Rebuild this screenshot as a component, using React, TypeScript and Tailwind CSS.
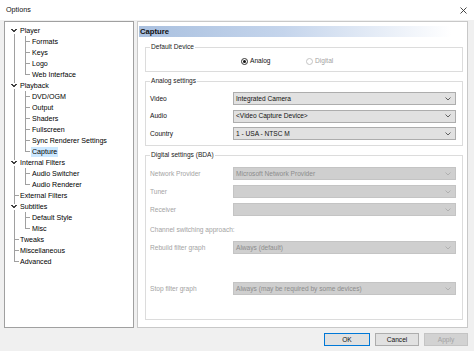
import React from "react";

type Node = { t: string; l: 0 | 1; exp?: boolean; sel?: boolean };

const tree: Node[] = [
  { t: "Player", l: 0, exp: true },
  { t: "Formats", l: 1 },
  { t: "Keys", l: 1 },
  { t: "Logo", l: 1 },
  { t: "Web Interface", l: 1 },
  { t: "Playback", l: 0, exp: true },
  { t: "DVD/OGM", l: 1 },
  { t: "Output", l: 1 },
  { t: "Shaders", l: 1 },
  { t: "Fullscreen", l: 1 },
  { t: "Sync Renderer Settings", l: 1 },
  { t: "Capture", l: 1, sel: true },
  { t: "Internal Filters", l: 0, exp: true },
  { t: "Audio Switcher", l: 1 },
  { t: "Audio Renderer", l: 1 },
  { t: "External Filters", l: 0 },
  { t: "Subtitles", l: 0, exp: true },
  { t: "Default Style", l: 1 },
  { t: "Misc", l: 1 },
  { t: "Tweaks", l: 0 },
  { t: "Miscellaneous", l: 0 },
  { t: "Advanced", l: 0 },
];

const ROW = 11;
const TOP = 3;
const cy = (i: number) => TOP + ROW * i + 5.5;

function TreeLines() {
  const segs: React.ReactNode[] = [];
  const roots = tree.map((n, i) => (n.l === 0 ? i : -1)).filter((i) => i >= 0);
  const RX = 9.5;
  const CX = 20.5;
  for (let k = 0; k < roots.length - 1; k++) {
    const a = roots[k];
    const b = roots[k + 1];
    const y1 = cy(a) + (tree[a].exp ? 3 : 0);
    const y2 = cy(b) - (tree[b].exp ? 3 : 0);
    segs.push(<line key={`r${k}`} x1={RX} y1={y1} x2={RX} y2={y2} />);
  }
  roots.forEach((r) => {
    if (!tree[r].exp) {
      segs.push(<line key={`rt${r}`} x1={RX} y1={cy(r)} x2={14} y2={cy(r)} />);
    } else {
      const c = cy(r);
      segs.push(
        <polyline
          key={`ch${r}`}
          points={`${6.5},${c - 1.5} ${9},${c + 1} ${11.5},${c - 1.5}`}
          fill="none"
          stroke="#404040"
          strokeWidth={1}
        />
      );
      let last = r;
      let j = r + 1;
      while (j < tree.length && tree[j].l === 1) {
        last = j;
        segs.push(<line key={`ct${j}`} x1={CX} y1={cy(j)} x2={25} y2={cy(j)} />);
        j++;
      }
      if (last > r) {
        segs.push(<line key={`cv${r}`} x1={CX} y1={cy(r) + 5.5} x2={CX} y2={cy(last) + 0.5} />);
      }
    }
  });
  return (
    <svg
      className="absolute left-0 top-0"
      width={128}
      height={260}
      stroke="#a0a0a0"
      strokeWidth={1}
      shapeRendering="crispEdges"
    >
      {segs}
    </svg>
  );
}

function Chevron({ color }: { color: string }) {
  return (
    <svg width="6" height="4" viewBox="0 0 6 4">
      <polyline points="0.5,0.5 3,3 5.5,0.5" fill="none" stroke={color} strokeWidth="1" />
    </svg>
  );
}

function Select({ value, disabled }: { value: string; disabled?: boolean }) {
  return (
    <div
      className={
        disabled
          ? "w-[223px] h-[13px] border border-[#c4c4c4] bg-[#cfcfcf] text-[#8c8c8c] flex items-center justify-between pl-[2px] pr-[4px]"
          : "w-[223px] h-[13px] border border-[#adadad] bg-[#e1e1e1] text-[#111] flex items-center justify-between pl-[2px] pr-[4px]"
      }
    >
      <span className="leading-[10px] whitespace-nowrap">{value}</span>
      <Chevron color={disabled ? "#b0b0b0" : "#606060"} />
    </div>
  );
}

function Row({ label, value, disabled }: { label: string; value: string; disabled?: boolean }) {
  return (
    <div className="flex items-center h-[13px]">
      <div className={disabled ? "w-[83px] text-[#a3a3a3]" : "w-[83px] text-[#111]"}>{label}</div>
      <Select value={value} disabled={disabled} />
    </div>
  );
}

function Legend({ children }: { children: React.ReactNode }) {
  return <legend className="px-[1px] leading-[10px] text-[#222]">{children}</legend>;
}

export default function App() {
  return (
    <div
      className="w-[474px] h-[351px] bg-[#f0f0f0] flex flex-col overflow-hidden text-black"
      style={{ fontFamily: '"Liberation Sans", Arial, sans-serif' }}
    >
      {/* Title bar */}
      <div className="h-[20px] bg-white flex items-center justify-between pl-[6px] pr-[7px]">
        <span className="text-[7.2px] leading-[10px] text-[#111]">Options</span>
        <svg width="7" height="7" viewBox="0 0 7 7">
          <path d="M0.5,0.5 L6.5,6.5 M6.5,0.5 L0.5,6.5" stroke="#333" strokeWidth="0.9" />
        </svg>
      </div>

      {/* Main */}
      <div className="flex pl-[4px] gap-[3px] mt-[1px] h-[307px]">
        {/* Tree */}
        <div className="relative w-[130px] h-[307px] border border-[#a0a0a0] bg-white">
          <TreeLines />
          <div className="relative flex flex-col pt-[3px] text-[7.1px]">
            {tree.map((n, i) => (
              <div
                key={i}
                className={
                  "h-[11px] flex items-center " + (n.l === 0 ? "pl-[15px]" : n.sel ? "pl-[26px]" : "pl-[27px]")
                }
              >
                {n.sel ? (
                  <span className="bg-[#cce8ff] px-[1px] leading-[10px] h-[10px]">{n.t}</span>
                ) : (
                  <span className="leading-[10px] whitespace-nowrap">{n.t}</span>
                )}
              </div>
            ))}
          </div>
        </div>

        {/* Page */}
        <div className="w-[331px] h-[307px] border border-[#c8c8c8] bg-white flex flex-col text-[6.6px]">
          <div className="mt-[4px] ml-[1px] mr-[6px] h-[11px] flex items-center pl-[1px] bg-[linear-gradient(to_right,#a9c0df_0%,#c5d5ec_45%,#ffffff_97%)]">
            <span className="font-bold text-[7.7px] leading-[10px] text-[#111]">Capture</span>
          </div>

          {/* Default Device */}
          <fieldset className="ml-[7px] w-[318px] mt-[5px] border border-[#dcdcdc] pl-[4px] pr-[5px] pt-[4px] pb-[5px]">
            <Legend>Default Device</Legend>
            <div className="h-[10px] flex items-center pl-[91px]">
              <div className="w-[65px] flex items-center gap-[2px]">
                <span className="w-[7px] h-[7px] rounded-full border border-[#333] bg-white flex items-center justify-center">
                  <span className="w-[3px] h-[3px] rounded-full bg-[#111]" />
                </span>
                <span className="leading-[10px] text-[#111]">Analog</span>
              </div>
              <div className="flex items-center gap-[2px]">
                <span className="w-[7px] h-[7px] rounded-full border border-[#c4c4c4] bg-white" />
                <span className="leading-[10px] text-[#a3a3a3]">Digital</span>
              </div>
            </div>
          </fieldset>

          {/* Analog settings */}
          <fieldset className="ml-[7px] w-[318px] mt-[4px] border border-[#dcdcdc] pl-[4px] pr-[5px] pt-[6px] pb-[5px]">
            <Legend>Analog settings</Legend>
            <div className="flex flex-col gap-[4.5px]">
              <Row label="Video" value="Integrated Camera" />
              <Row label="Audio" value="<Video Capture Device>" />
              <Row label="Country" value="1 - USA - NTSC M" />
            </div>
          </fieldset>

          {/* Digital settings */}
          <fieldset className="ml-[7px] w-[318px] mt-[4px] border border-[#dcdcdc] pl-[4px] pr-[5px] pt-[7px] pb-[24px]">
            <Legend>Digital settings (BDA)</Legend>
            <div className="flex flex-col gap-[5px]">
              <Row label="Network Provider" value="Microsoft Network Provider" disabled />
              <Row label="Tuner" value="" disabled />
              <Row label="Receiver" value="" disabled />
            </div>
            <div className="h-[10px] mt-[9px] flex items-center text-[#a3a3a3] leading-[10px]">
              Channel switching approach:
            </div>
            <div className="mt-[6px]">
              <Row label="Rebuild filter graph" value="Always (default)" disabled />
            </div>
            <div className="mt-[28px]">
              <Row label="Stop filter graph" value="Always (may be required by some devices)" disabled />
            </div>
          </fieldset>
        </div>
      </div>

      {/* Buttons */}
      <div className="flex justify-end gap-[5px] pr-[6px] pt-[5px] text-[6.6px]">
        <button className="w-[46px] h-[13px] border border-[#0078d7] bg-[#e1e1e1] leading-[10px] text-[#111]">OK</button>
        <button className="w-[44px] h-[13px] border border-[#adadad] bg-[#e1e1e1] leading-[10px] text-[#111]">Cancel</button>
        <button className="w-[44px] h-[13px] border border-[#c4c4c4] bg-[#d2d2d2] leading-[10px] text-[#a3a3a3]">Apply</button>
      </div>
    </div>
  );
}
